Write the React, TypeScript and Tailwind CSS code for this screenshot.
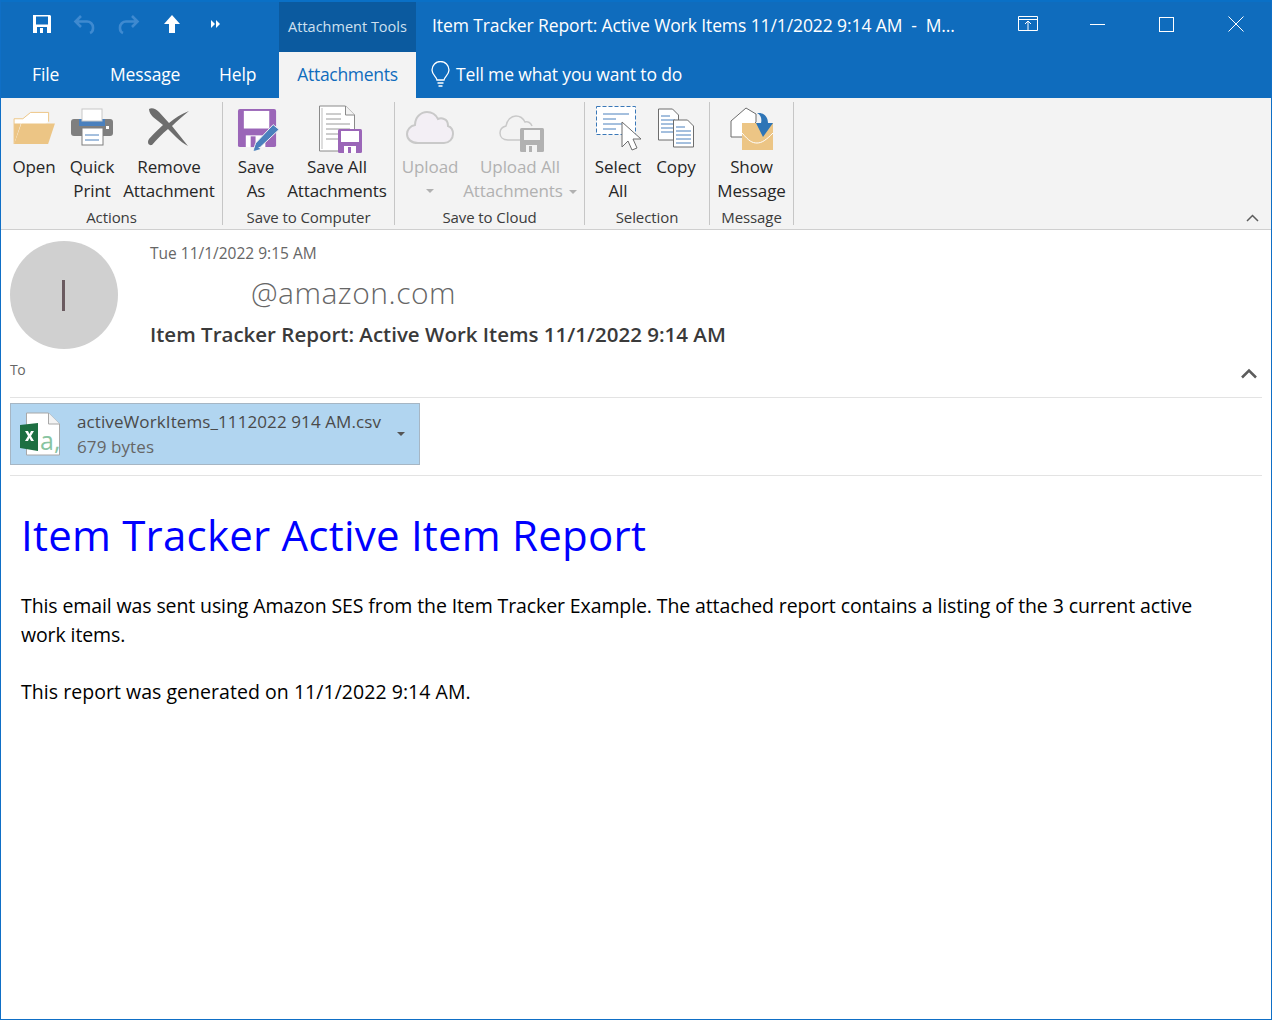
const font = "font-['Open_Sans','Noto_Sans',sans-serif]";

function SaveQat() {
  return (
    <svg width="20" height="20" viewBox="0 0 20 20">
      <path d="M1 1h17l1 1v17H1z" fill="#fff" />
      <rect x="4" y="2.500" width="12" height="8" fill="#0f6dbf" />
      <rect x="5" y="13" width="10" height="6" fill="#0f6dbf" />
      <rect x="8" y="14" width="3" height="5" fill="#fff" />
    </svg>
  );
}
function Undo({ flip }: { flip?: boolean }) {
  return (
    <svg width="24" height="22" viewBox="0 0 24 22" className={flip ? "-scale-x-100" : ""}>
      <path d="M8 3 2.500 8.500 8 14M3 8.500h11a6 6 0 0 1 6 6v1a5 5 0 0 1-3 4.500" fill="none" stroke="#3f8ad0" strokeWidth="2.600" />
    </svg>
  );
}
function FolderIcon() {
  return (
    <svg width="43" height="35" viewBox="0 0 44 36">
      <path d="M1 35V9h9l8-6.500h18.500V12" fill="#fff" stroke="#ecc585" strokeWidth="1" />
      <path d="M1 35 8.500 14H43l-7 21z" fill="#ecc585" />
      <path d="M1 14v21l7-21z" fill="#ecc585" />
    </svg>
  );
}
function PrintIcon() {
  return (
    <svg width="44" height="38" viewBox="0 0 44 38">
      <rect x="1" y="11" width="42" height="17" rx="3" fill="#7f7f7f" />
      <rect x="9" y="11" width="26" height="7" fill="#4a80bd" />
      <rect x="12" y="1" width="20" height="12" fill="#fff" stroke="#c8c8c8" />
      <rect x="12" y="20" width="21" height="17" fill="#fff" stroke="#7f7f7f" />
      <path d="M15 27h14M15 32h14" stroke="#4a80bd" />
      <rect x="36" y="18" width="3" height="3" fill="#fff" />
    </svg>
  );
}
function RemoveIcon() {
  return (
    <svg width="42" height="38" viewBox="0 0 42 38">
      <path d="M1 1C4-1 8 1 11 4l10 11C27 10 33 6 41 3 35 8 29 13 24 18l8 10 8 10c-4-2-8-5-12-9l-8-8C14 26 9 31 4 37 0 38-1 34 1 31c4-5 9-9 14-14L5 9C3 7 1 4 1 1z" fill="#6d6d6d" />
    </svg>
  );
}
function SaveAsIcon() {
  return (
    <svg width="43" height="43" viewBox="0 0 44 44">
      <path d="M1 3a2 2 0 0 1 2-2h35a2 2 0 0 1 2 2v35a2 2 0 0 1-2 2H3a2 2 0 0 1-2-2z" fill="#9b66b8" />
      <rect x="7" y="3" width="26" height="18" fill="#fff" />
      <rect x="9" y="28" width="20" height="12" fill="#fff" />
      <rect x="14" y="29" width="5" height="11" fill="#9b66b8" />
      <path d="M17 43l2-7 18-19 6 5-19 18z" fill="#4a80bd" stroke="#f3f3f3" />
      <path d="M17 44l2-6 5 4z" fill="#4a80bd" />
    </svg>
  );
}
function SaveAllIcon() {
  return (
    <svg width="44" height="48" viewBox="0 0 44 48">
      <path d="M1.500 1h26l9 9v36h-35z" fill="#fff" stroke="#8a8a8a" />
      <path d="M4 3v41" stroke="#bdbdbd" />
      <path d="M27.500 1v9h9" fill="#f3f3f3" stroke="#8a8a8a" />
      <path d="M8 9h15M8 14h15M8 19h24M8 24h24M8 29h18M8 34h18" stroke="#9a9a9a" />
      <rect x="20" y="24" width="24" height="24" rx="1.500" fill="#9b66b8" />
      <rect x="23" y="26" width="18" height="11" fill="#fff" />
      <rect x="26" y="41" width="12" height="7" fill="#fff" />
      <rect x="30" y="42" width="3" height="6" fill="#9b66b8" />
    </svg>
  );
}
function CloudIcon() {
  return (
    <svg width="48" height="36" viewBox="0 0 48 36">
      <path d="M12 33C5 33 1 29 1 24c0-4 3-8 8-9 0-8 6-13 12-13 5 0 9 3 11 7 2-1 4-1 6 0 3 1 4 4 4 7 3 1 5 4 5 8 0 5-4 9-9 9z" fill="#f3eff5" stroke="#c9c9c9" strokeWidth="2" />
    </svg>
  );
}
function CloudSaveIcon() {
  return (
    <svg width="46" height="40" viewBox="0 0 46 40">
      <path d="M9 27C4 27 1 24 1 20c0-3 2-6 6-7 1-6 5-10 10-10 4 0 7 2 9 6 3-1 6 1 7 4" fill="#f3f3f3" stroke="#c9c9c9" strokeWidth="1.500" />
      <path d="M9 27h13" stroke="#c9c9c9" strokeWidth="1.500" />
      <rect x="21" y="15" width="24" height="24" rx="1.500" fill="#b1b1b1" />
      <rect x="25" y="17" width="16" height="10" fill="#f3f3f3" />
      <rect x="27" y="32" width="11" height="7" fill="#f3f3f3" />
      <rect x="30" y="33" width="3" height="6" fill="#b1b1b1" />
    </svg>
  );
}
function SelectAllIcon() {
  return (
    <svg width="46" height="46" viewBox="0 0 46 46">
      <rect x="1.500" y="1.500" width="39" height="28" fill="#fff" stroke="#3a78b8" strokeDasharray="4 2" />
      <path d="M8 9h26M8 14h13M8 19h20M8 24h13" stroke="#4a80bd" strokeWidth="1" />
      <path d="M27 17v25l6-6 4 9 5-2-4-9h8z" fill="#fff" stroke="#6d6d6d" strokeWidth="1" />
    </svg>
  );
}
function CopyIcon() {
  return (
    <svg width="38" height="40" viewBox="0 0 38 40">
      <path d="M1.500 1h14l6 6v25h-20z" fill="#fff" stroke="#6d6d6d" />
      <path d="M4 8h9M4 12h14M4 16h14M4 20h14M4 24h14" stroke="#4a80bd" />
      <path d="M16.500 12h14l6 6v21h-20z" fill="#fff" stroke="#6d6d6d" />
      <path d="M19 19h9M19 23h15M19 27h15M19 31h15M19 35h15" stroke="#4a80bd" />
    </svg>
  );
}
function ShowMsgIcon() {
  return (
    <svg width="44" height="44" viewBox="0 0 44 44">
      <path d="M1 14 16 1l10 6v8L12 30H1z" fill="#fff" stroke="#6d6d6d" />
      <rect x="12" y="16" width="31" height="27" fill="#ecc585" />
      <path d="M12 26c7 8 10 10 15 10s9-3 16-10" fill="none" stroke="#fff" strokeWidth="1" />
      <path d="M27 6c9-1 11 6 11 10h5L33 30 26 16h5c1-4 0-8-4-10z" fill="#2e75b6" />
    </svg>
  );
}
function ExcelIcon() {
  return (
    <svg width="42" height="44" viewBox="0 0 42 44">
      <path d="M6.500 1h22l11 11v31h-33z" fill="#fff" stroke="#a8a8a8" />
      <path d="M28.500 1v11h11" fill="#f3f3f3" stroke="#a8a8a8" />
      <path d="M0 13l18-2v28L0 36z" fill="#1d6f42" />
      <path d="M5 19h3l1.500 3 1.500-3h3l-3 5 3 5h-3l-1.500-3-1.500 3H5l3-5z" fill="#fff" />
      <text x="20" y="38" fontSize="25" fill="#88c4a1" fontFamily="Open Sans">a,</text>
    </svg>
  );
}

function RibbonBtn({ w, lines, icon, off, caret, t }: { w: string; lines: string[]; icon: React.ReactNode; off?: boolean; caret?: boolean; t: string }) {
  return (
    <div className={`${w} flex flex-col items-center shrink-0`}>
      <div className={`h-[50px] flex items-start justify-center ${t}`}>{icon}</div>
      <div className={`text-center text-[17px] leading-[24px] tracking-[-0.1px] whitespace-nowrap ${off ? "text-[#b1b1b1]" : "text-[#262626]"}`}>
        {lines.map((l, i) => (
          <div key={i}>
            {l}
            {caret && i === lines.length - 1 && <span className="ml-[6px] inline-block align-middle w-0 h-0 border-x-[4px] border-x-transparent border-t-[4px] border-t-[#b1b1b1]" />}
          </div>
        ))}
        {off && lines.length === 1 && (
          <div className="flex h-[24px] items-center justify-center">
            <span className="w-0 h-0 border-x-[4px] border-x-transparent border-t-[4px] border-t-[#b1b1b1]" />
          </div>
        )}
      </div>
    </div>
  );
}

function Group({ w, label, pl, children }: { w: string; label: string; pl: string; children: React.ReactNode }) {
  return (
    <div className={`${w} h-[123px] shrink-0 flex flex-col mt-[4px] border-r border-[#c6c6c6]`}>
      <div className={`flex shrink-0 ${pl} h-[107px] pt-[3px]`}>{children}</div>
      <div className="text-center text-[15px] leading-[16px] tracking-[-0.08px] text-[#3b3b3b] whitespace-nowrap">{label}</div>
    </div>
  );
}

export default function App() {
  return (
    <div className={`${font} w-[1272px] h-[1020px] flex flex-col bg-white border border-[#0f6fc6] border-t-0 overflow-hidden`}>
      <header className="h-[98px] shrink-0 bg-[#0f6cbd] text-white flex flex-col -mx-px">
        <div className="h-[52px] flex items-stretch pb-[2px] border-t-2 border-[#0a70c6]">
          <div className="w-[279px] flex items-center shrink-0 pl-[32px] pb-[4px]">
            <SaveQat />
            <span className="ml-[21px]"><Undo /></span>
            <span className="ml-[19px]"><Undo flip /></span>
            <svg className="ml-[24px]" width="16" height="18" viewBox="0 0 16 18"><path d="M8 0l8 9h-5v9H5V9H0z" fill="#fff" /></svg>
            <svg className="ml-[31px]" width="10" height="8" viewBox="0 0 10 8"><path d="M0 0l4 4-4 4zM5 0l4 4-4 4z" fill="#fff" /></svg>
          </div>
          <div className="w-[137px] bg-[#0b5a9f] text-[#cfe0f0] text-[14.500px] flex items-center justify-center shrink-0 -mb-[2px]">Attachment Tools</div>
          <div className="ml-[16px] pb-[2px] flex-1 flex items-center text-[17.500px] tracking-[-0.1px] whitespace-pre">Item Tracker Report: Active Work Items 11/1/2022 9:14 AM  -  M...</div>
          <div className="w-[262px] shrink-0 flex items-center pb-[4px]">
            <svg className="ml-[8px]" width="20" height="16" viewBox="0 0 20 16"><path d="M.5.500h19v14H.5zM.5 3.500h19M10 14.500V5.500M7 8l3-3 3 3" fill="none" stroke="#fff" /></svg>
            <div className="ml-[52px] w-[15px] h-px bg-white" />
            <div className="ml-[54px] w-[15px] h-[15px] border border-white" />
            <svg className="ml-[54px]" width="16" height="16" viewBox="0 0 16 16"><path d="M.5.500l15 15M15.500.500l-15 15" stroke="#fff" /></svg>
          </div>
        </div>
        <div className="h-[46px] flex items-stretch text-[17.500px] tracking-[-0.15px]">
          <div className="w-[90px] pl-[32px] pb-[2px] flex items-center shrink-0">File</div>
          <div className="w-[109px] pl-[20px] pb-[2px] flex items-center shrink-0">Message</div>
          <div className="w-[80px] pl-[20px] pb-[2px] flex items-center shrink-0">Help</div>
          <div className="w-[137px] bg-[#f3f3f3] text-[#0f6cbd] tracking-[-0.3px] pb-[2px] flex items-center justify-center shrink-0">Attachments</div>
          <div className="ml-[15px] flex items-center gap-[6px] pb-[2px]">
            <svg width="19" height="26" viewBox="0 0 19 26"><path d="M6 19c0-3-5-5-5-10a8.500 8.500 0 0 1 17 0c0 5-5 7-5 10zM6.500 22h6M7.500 25h4" fill="none" stroke="#fff" strokeWidth="1.300" /></svg>
            <span>Tell me what you want to do</span>
          </div>
        </div>
      </header>

      <div className="h-[132px] shrink-0 bg-[#f3f3f3] border-b border-[#cfcfcf] flex relative">
        <Group w="w-[222px]" label="Actions" pl="pl-[2px]">
          <RibbonBtn w="w-[62px]" lines={["Open"]} icon={<FolderIcon />} t="pt-[5px]" />
          <RibbonBtn w="w-[54px]" lines={["Quick", "Print"]} icon={<PrintIcon />} t="pt-[3px]" />
          <RibbonBtn w="w-[100px]" lines={["Remove", "Attachment"]} icon={<RemoveIcon />} t="pt-[3px]" />
        </Group>
        <Group w="w-[172px]" label="Save to Computer" pl="pl-[6px]">
          <RibbonBtn w="w-[54px]" lines={["Save", "As"]} icon={<span className="ml-[4px] block"><SaveAsIcon /></span>} t="pt-[3px]" />
          <RibbonBtn w="w-[108px]" lines={["Save All", "Attachments"]} icon={<span className="ml-[5px] block"><SaveAllIcon /></span>} t="pt-0" />
        </Group>
        <Group w="w-[190px]" label="Save to Cloud" pl="pl-[2px]">
          <RibbonBtn w="w-[66px]" lines={["Upload"]} icon={<CloudIcon />} off t="pt-[5px]" />
          <RibbonBtn w="w-[114px]" lines={["Upload All", "Attachments"]} icon={<span className="ml-[3px] block"><CloudSaveIcon /></span>} off caret t="pt-[8px]" />
        </Group>
        <Group w="w-[125px]" label="Selection" pl="pl-[4px]">
          <RibbonBtn w="w-[58px]" lines={["Select", "All"]} icon={<SelectAllIcon />} t="pt-0" />
          <RibbonBtn w="w-[58px]" lines={["Copy"]} icon={<CopyIcon />} t="pt-[3px]" />
        </Group>
        <Group w="w-[84px]" label="Message" pl="pl-[0px]">
          <RibbonBtn w="w-[83px]" lines={["Show", "Message"]} icon={<ShowMsgIcon />} t="pt-[2px]" />
        </Group>
        <svg className="absolute right-[12px] bottom-[7px]" width="13" height="8" viewBox="0 0 13 8"><path d="M1 7l5.500-5.500L12 7" fill="none" stroke="#5c5c5c" strokeWidth="1.500" /></svg>
      </div>

      <div className="px-[9px] shrink-0">
        <div className="flex h-[128px] pt-[11px]">
          <div className="w-[108px] h-[108px] rounded-full bg-[#d0d0d0] flex items-center justify-center shrink-0">
            <div className="w-[3px] h-[31px] mr-[1px] bg-[#6b5b60]" />
          </div>
          <div className="ml-[32px] flex-1 min-w-0">
            <div className="text-[15.500px] leading-[20px] text-[#666] mt-[2px]">Tue 11/1/2022 9:15 AM</div>
            <div className="text-[30px] leading-[40px] text-[#666] pl-[101px] mt-[10px] tracking-[0.5px] font-light">@amazon.com</div>
            <div className="text-[20.500px] leading-[30px] font-semibold text-[#3a3a3a] mt-[6px]">Item Tracker Report: Active Work Items 11/1/2022 9:14 AM</div>
          </div>
        </div>
        <div className="h-[40px] border-b border-[#e3e3e3] flex justify-between">
          <span className="text-[14px] leading-[24px] text-[#666] tracking-[-0.5px]">To</span>
          <svg className="mt-[10px] mr-[4px]" width="18" height="11" viewBox="0 0 18 11"><path d="M2 9.500 9 2.500 16 9.500" fill="none" stroke="#5c5c5c" strokeWidth="2.500" /></svg>
        </div>
        <div className="h-[78px] border-b border-[#e3e3e3] pt-[5px]">
          <div className="w-[410px] h-[62px] bg-[#b1d5f0] border border-[#a6b6c4] flex items-center relative pl-[9px]">
            <ExcelIcon />
            <div className="ml-[15px] text-[17px] leading-[25px] text-[#4a4a4a] tracking-[0.1px]">
              <div>activeWorkItems_1112022 914 AM.csv</div>
              <div className="text-[#666]">679 bytes</div>
            </div>
            <span className="absolute left-[386px] top-[28px] w-0 h-0 border-x-[4px] border-x-transparent border-t-[4px] border-t-[#555]" />
          </div>
        </div>
      </div>

      <main className="pl-[20px] pr-[60px] text-black">
        <h1 className="text-[42px] leading-[56px] text-[#0000ff] mt-[31px] tracking-[0.23px]">Item Tracker Active Item Report</h1>
        <p className="mt-[28px] text-[19.500px] leading-[29px] tracking-[-0.11px]">This email was sent using Amazon SES from the Item Tracker Example. The attached report contains a listing of the 3 current active work items.</p>
        <p className="mt-[28px] text-[19.500px] leading-[29px] tracking-[0.04px]">This report was generated on 11/1/2022 9:14 AM.</p>
      </main>
    </div>
  );
}
